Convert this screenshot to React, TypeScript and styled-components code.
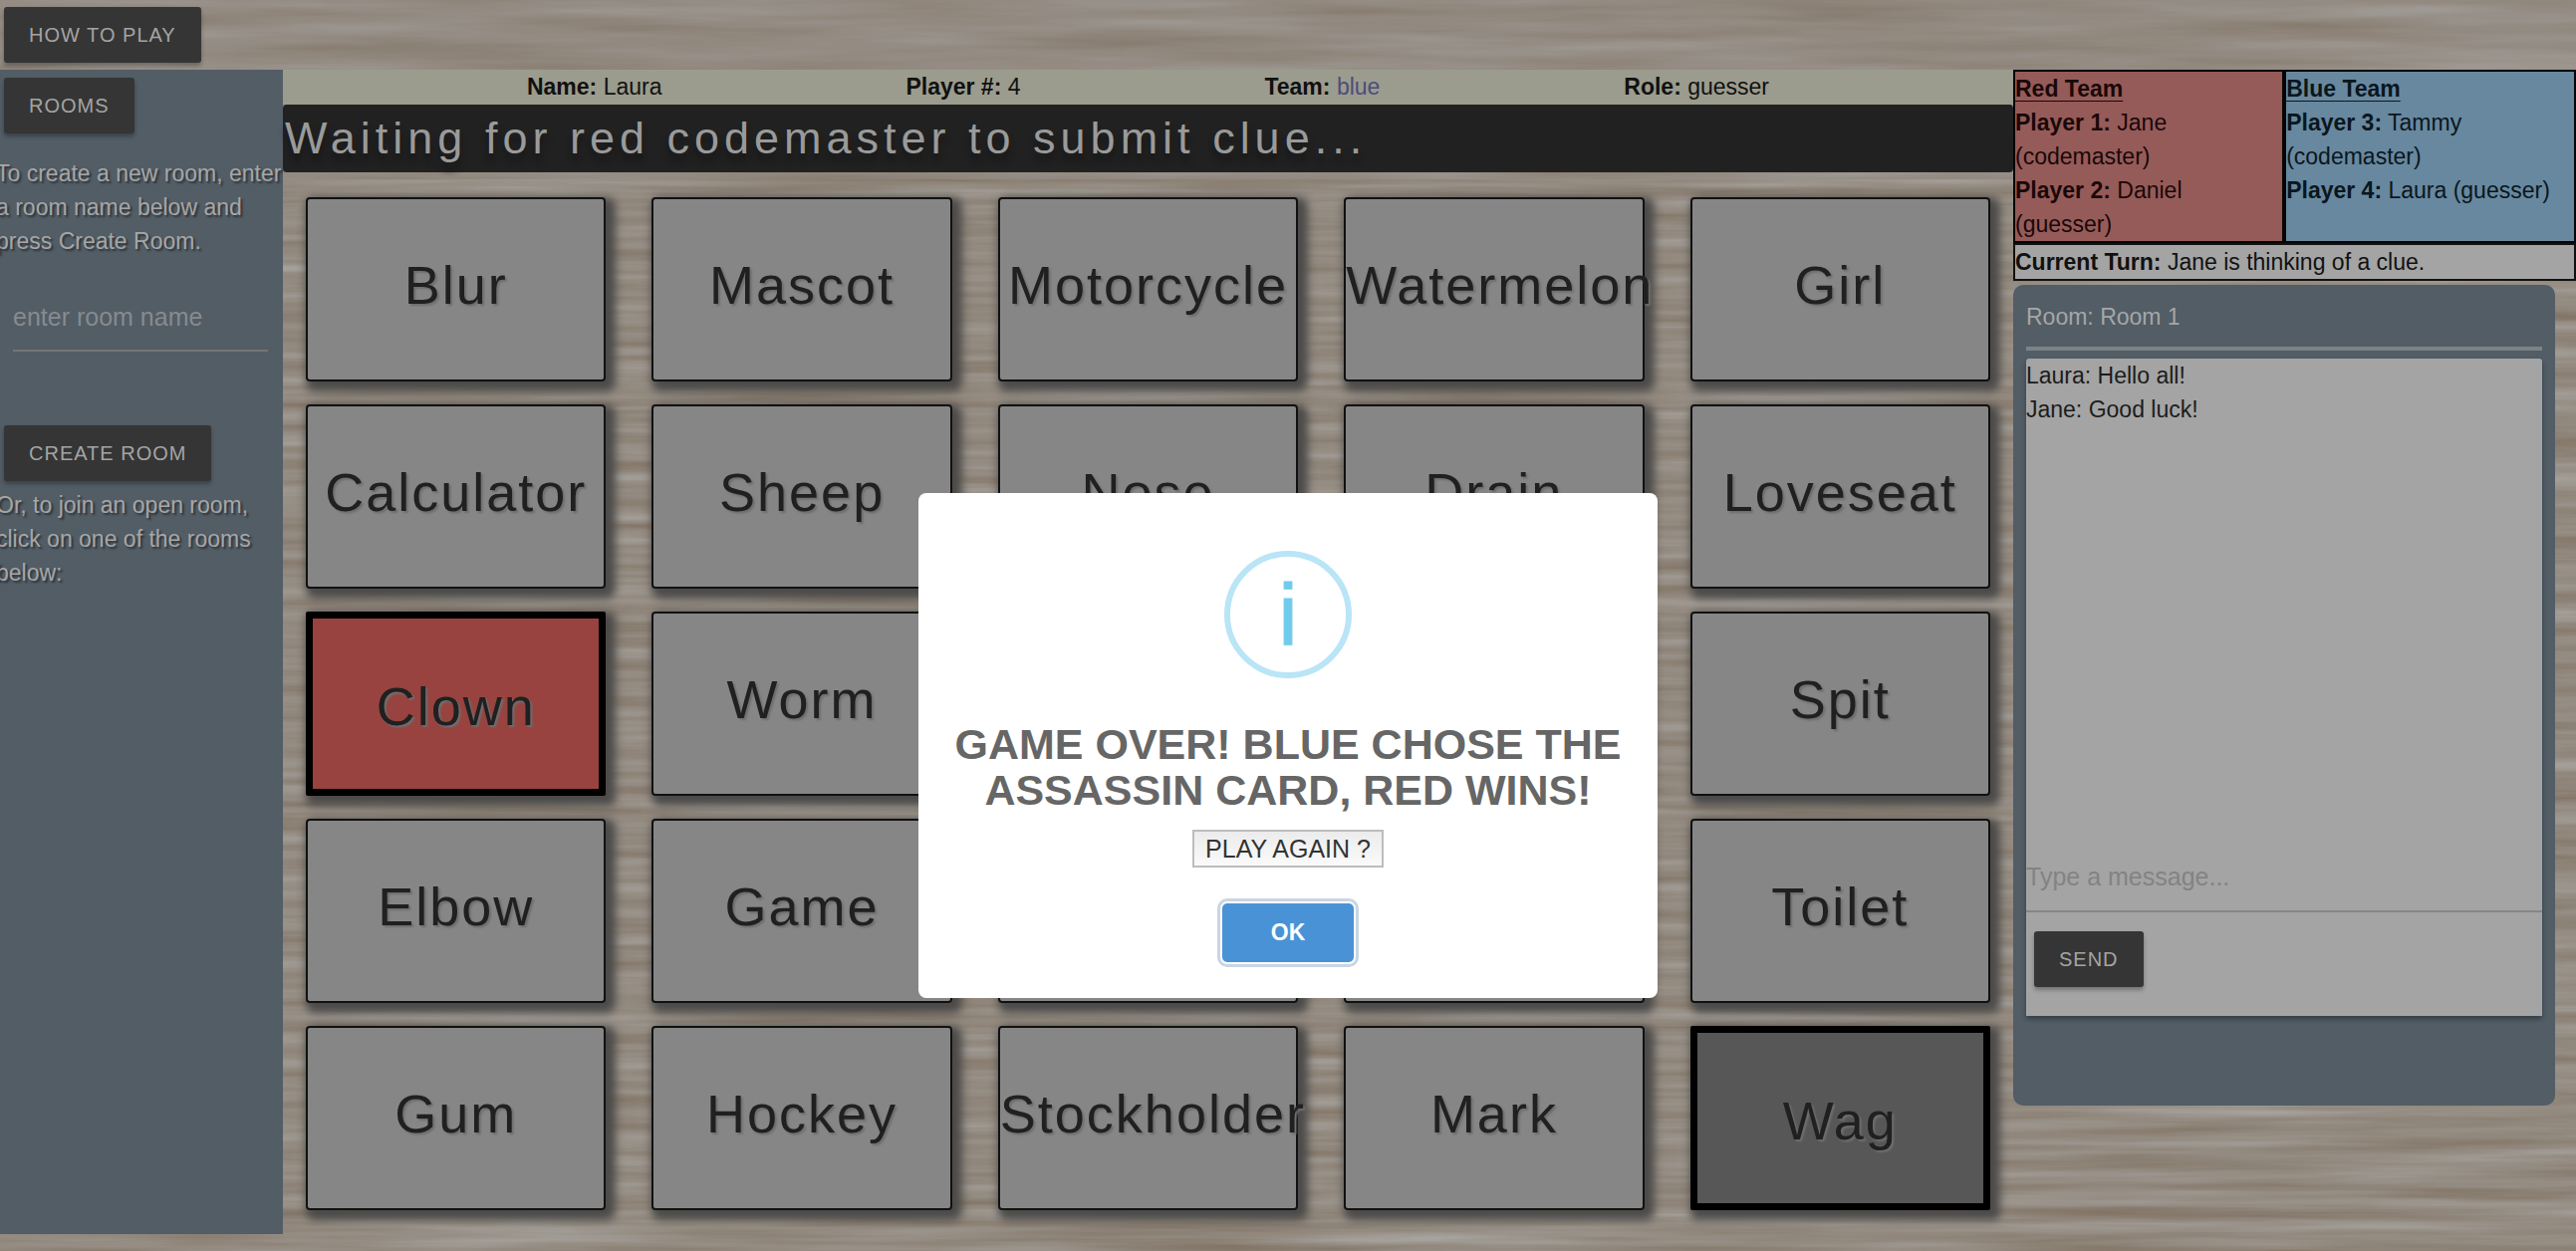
import React, { useState } from "react";
import styled, { createGlobalStyle, css } from "styled-components";

const GlobalStyle = createGlobalStyle`
  *, *::before, *::after { box-sizing: border-box; }
  body {
    margin: 0;
    background: #91887e;
    color: #111;
    font: 23px/34px "Liberation Sans", Arial, Helvetica, sans-serif;
  }
  button, input { font-family: inherit; margin: 0; }
`;

const Page = styled.div`
  position: relative;
  min-height: 100vh;
  overflow: hidden;
  isolation: isolate;
`;

const WoodSvg = styled.svg`
  position: absolute;
  inset: 0;
  z-index: -1;
  width: 100%;
  height: 100%;
`;

const Header = styled.header`
  height: 70px;
  padding: 7px 4px;
`;

const DarkButton = styled.button`
  display: block;
  height: 56px;
  padding: 0 25px;
  border: 0;
  border-radius: 3px;
  background: #353535;
  color: #a4a4a4;
  font-size: 20px;
  letter-spacing: 1px;
  text-transform: uppercase;
  box-shadow: 0 3px 4px rgba(0, 0, 0, 0.3);
  cursor: pointer;
`;

const Columns = styled.div`
  display: grid;
  grid-template-columns: 284fr 1737fr 565fr;
  align-items: start;
`;

const Sidebar = styled.aside`
  min-height: 1169px;
  padding: 8px 0 0 4px;
  background: #525d66;
`;

const Hint = styled.p<{ $top: number }>`
  margin: ${(p) => p.$top}px -4px 0 -8px;
  color: #a6a6a6;
  text-shadow: 2px 2px 2px #2c3338;
`;

const RoomForm = styled.form`
  display: flex;
  flex-direction: column;
  align-items: flex-start;
`;

const RoomInput = styled.input`
  width: calc(100% - 24px);
  height: 68px;
  margin: 26px 0 74px 9px;
  padding: 0;
  border: 0;
  border-bottom: 2px solid #757575;
  border-radius: 0;
  background: transparent;
  color: #a6a6a6;
  font-size: 25px;
  outline: 0;
  &::placeholder { color: #868b8f; opacity: 1; }
`;

const Board = styled.main`
  min-width: 0;
`;

const InfoBar = styled.div`
  display: flex;
  justify-content: space-evenly;
  height: 35px;
  background: #9b9c8d;
`;

const TeamName = styled.span`
  color: #4c4c7c;
`;

const Status = styled.div`
  height: 68px;
  padding-left: 2px;
  border-radius: 4px;
  background: #212121;
  color: #9a9a9a;
  font-size: 45px;
  line-height: 68px;
  letter-spacing: 5px;
  white-space: nowrap;
  text-shadow: 0 8px 6px #171717;
`;

const Cards = styled.div`
  display: grid;
  grid-template-columns: repeat(5, minmax(0, 1fr));
  gap: 23px 46px;
  padding: 25px 23px;
`;

type Kind = "hidden" | "red" | "assassin";

const Card = styled.button<{ $kind: Kind }>`
  height: 185px;
  padding: 0 0 10px;
  border: 2px solid #111;
  border-radius: 4px;
  background: #868686;
  color: #202020;
  font-size: 54px;
  line-height: 62px;
  letter-spacing: 2px;
  text-align: center;
  text-shadow: 2px 2px 2px #6e6e6e;
  box-shadow: 5px 5px 8px 5px #4c4b4a;
  cursor: pointer;
  ${(p) =>
    p.$kind !== "hidden" &&
    css`
      padding: 4px 0 0;
      border: 7px solid #000;
      border-radius: 2px;
      background: ${p.$kind === "red" ? "#98433f" : "#575757"};
    `}
`;

const Side = styled.aside`
  min-width: 0;
`;

const Teams = styled.div`
  display: flex;
`;

const Team = styled.section<{ $red?: boolean }>`
  flex: ${(p) => (p.$red ? 272 : 293)} 1 0;
  min-width: 0;
  border: 2px solid #050505;
  background: ${(p) => (p.$red ? "#955b59" : "#67889e")};
  color: ${(p) => (p.$red ? "#1a0808" : "#0a161e")};
`;

const TeamTitle = styled.h2`
  margin: 0;
  font-size: 23px;
  line-height: 34px;
  text-decoration: underline;
  text-decoration-thickness: 1px;
  text-underline-offset: 4px;
`;

const Player = styled.p`
  margin: 0;
`;

const Turn = styled.div`
  border: 2px solid #111;
  background: #a4a4a4;
`;

const Chat = styled.section`
  margin: 4px 21px 0 0;
  padding: 15px 13px 90px;
  border-radius: 10px;
  background: #525d66;
`;

const RoomTitle = styled.h2`
  margin: 0;
  padding-bottom: 13px;
  border-bottom: 4px solid #7c8388;
  color: #a6a6a6;
  font-size: 23px;
  line-height: 34px;
  font-weight: 400;
`;

const ChatCard = styled.div`
  display: flex;
  flex-direction: column;
  margin-top: 8px;
  height: 660px;
  border-radius: 3px 3px 0 0;
  background: #a4a4a4;
  color: #1c1c1c;
  box-shadow: 0 3px 5px rgba(0, 0, 0, 0.35);
`;

const Messages = styled.ul`
  flex: 1;
  margin: 0;
  padding: 0;
  list-style: none;
`;

const MessageForm = styled.form`
  padding-bottom: 29px;
`;

const MessageInput = styled.input`
  display: block;
  width: 100%;
  height: 70px;
  margin-bottom: 19px;
  padding: 0;
  border: 0;
  border-bottom: 2px solid #868686;
  background: transparent;
  font-size: 25px;
  outline: 0;
  &::placeholder { color: #838383; opacity: 1; }
`;

const SendRow = styled.div`
  padding-left: 8px;
`;

const Overlay = styled.div`
  position: absolute;
  inset: 0;
  display: flex;
  align-items: flex-start;
  justify-content: center;
  padding-top: 495px;
`;

const Dialog = styled.div`
  display: flex;
  flex-direction: column;
  align-items: center;
  width: 742px;
  max-width: 100%;
  padding: 58px 30px 36px;
  border-radius: 8px;
  background: #fff;
`;

const InfoIcon = styled.div`
  display: flex;
  align-items: center;
  justify-content: center;
  width: 128px;
  height: 128px;
  border: 6px solid #b9e5f6;
  border-radius: 50%;
  color: #70cbec;
  font-size: 88px;
  line-height: 112px;
  -webkit-text-stroke: 1px #70cbec;
`;

const DialogTitle = styled.h1`
  margin: 43px 0 17px;
  color: #666;
  font-size: 43px;
  line-height: 46px;
  text-align: center;
`;

const PlayAgain = styled.button`
  height: 38px;
  padding: 0 11px;
  border: 2px solid #bdbdbd;
  background: linear-gradient(#ececec, #fafafa);
  color: #333;
  font-size: 25px;
  line-height: 30px;
`;

const OkButton = styled.button`
  width: 132px;
  height: 59px;
  margin-top: 36px;
  border: 0;
  border-radius: 5px;
  background: #4a92d6;
  color: #fff;
  font-size: 23px;
  font-weight: 700;
  box-shadow: 0 0 0 2px #fff, 0 0 0 5px #c8d5e4;
`;

function Wood() {
  return (
    <WoodSvg aria-hidden="true">
      <defs>
        <filter id="wide" x="0" y="0" width="100%" height="100%" colorInterpolationFilters="sRGB">
          <feTurbulence type="fractalNoise" baseFrequency="0.003 0.05" numOctaves={5} seed={7} />
          <feColorMatrix values="0.13 0 0 0 0.51  0.17 0 0 0 0.456  0.21 0 0 0 0.4  0 0 0 0 1" />
        </filter>
        <filter id="fine" x="0" y="0" width="100%" height="100%" colorInterpolationFilters="sRGB">
          <feTurbulence type="fractalNoise" baseFrequency="0.003 0.08" numOctaves={4} seed={3} />
          <feColorMatrix values="0.18 0 0 0 0.487  0.23 0 0 0 0.427  0.28 0 0 0 0.362  0 0 0 0 1" />
        </filter>
      </defs>
      <rect width="100%" height="100%" filter="url(#fine)" />
      <rect width="100%" height="180" filter="url(#wide)" />
    </WoodSvg>
  );
}

const WORDS: [string, Kind?][] = [
  ["Blur"], ["Mascot"], ["Motorcycle"], ["Watermelon"], ["Girl"],
  ["Calculator"], ["Sheep"], ["Nose"], ["Drain"], ["Loveseat"],
  ["Clown", "red"], ["Worm"], [""], [""], ["Spit"],
  ["Elbow"], ["Game"], [""], [""], ["Toilet"],
  ["Gum"], ["Hockey"], ["Stockholder"], ["Mark"], ["Wag", "assassin"],
];

export default function App() {
  const [room, setRoom] = useState("");
  const [message, setMessage] = useState("");
  return (
    <>
      <GlobalStyle />
      <Page>
        <Wood />
        <Header>
          <DarkButton type="button">How to play</DarkButton>
        </Header>
        <Columns>
          <Sidebar>
            <DarkButton type="button">Rooms</DarkButton>
            <Hint $top={23}>To create a new room, enter a room name below and press Create Room.</Hint>
            <RoomForm onSubmit={(e) => e.preventDefault()}>
              <RoomInput
                aria-label="Room name"
                placeholder="enter room name"
                value={room}
                onChange={(e) => setRoom(e.target.value)}
              />
              <DarkButton type="submit">Create room</DarkButton>
            </RoomForm>
            <Hint $top={7}>Or, to join an open room, click on one of the rooms below:</Hint>
          </Sidebar>
          <Board>
            <InfoBar>
              <span><b>Name:</b> Laura</span>
              <span><b>Player #:</b> 4</span>
              <span><b>Team:</b> <TeamName>blue</TeamName></span>
              <span><b>Role:</b> guesser</span>
            </InfoBar>
            <Status role="status">Waiting for red codemaster to submit clue...</Status>
            <Cards>
              {WORDS.map(([word, kind], i) => (
                <Card key={i} type="button" $kind={kind ?? "hidden"}>{word}</Card>
              ))}
            </Cards>
          </Board>
          <Side>
            <Teams>
              <Team $red>
                <TeamTitle>Red Team</TeamTitle>
                <Player><b>Player 1:</b> Jane (codemaster)</Player>
                <Player><b>Player 2:</b> Daniel (guesser)</Player>
              </Team>
              <Team>
                <TeamTitle>Blue Team</TeamTitle>
                <Player><b>Player 3:</b> Tammy (codemaster)</Player>
                <Player><b>Player 4:</b> Laura (guesser)</Player>
              </Team>
            </Teams>
            <Turn><b>Current Turn:</b> Jane is thinking of a clue.</Turn>
            <Chat>
              <RoomTitle>Room: Room 1</RoomTitle>
              <ChatCard>
                <Messages>
                  <li>Laura: Hello all!</li>
                  <li>Jane: Good luck!</li>
                </Messages>
                <MessageForm onSubmit={(e) => e.preventDefault()}>
                  <MessageInput
                    aria-label="Message"
                    placeholder="Type a message..."
                    value={message}
                    onChange={(e) => setMessage(e.target.value)}
                  />
                  <SendRow>
                    <DarkButton type="submit">Send</DarkButton>
                  </SendRow>
                </MessageForm>
              </ChatCard>
            </Chat>
          </Side>
        </Columns>
        <Overlay>
          <Dialog role="dialog" aria-labelledby="game-over">
            <InfoIcon aria-hidden="true">i</InfoIcon>
            <DialogTitle id="game-over">GAME OVER! BLUE CHOSE THE ASSASSIN CARD, RED WINS!</DialogTitle>
            <PlayAgain type="button">PLAY AGAIN ?</PlayAgain>
            <OkButton type="button">OK</OkButton>
          </Dialog>
        </Overlay>
      </Page>
    </>
  );
}
